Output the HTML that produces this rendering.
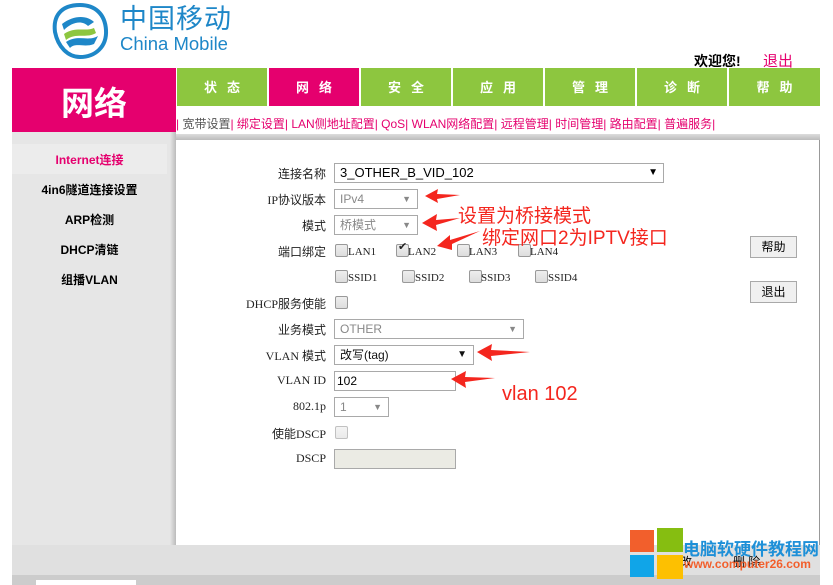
<!DOCTYPE html>
<html><head><meta charset="utf-8"><style>
body{margin:0;width:833px;height:585px;background:#fff;position:relative;overflow:hidden;font-family:"Liberation Sans","Noto Sans CJK SC",sans-serif;}
.a{position:absolute;}
.tab{position:absolute;top:68px;height:38px;background:#8dc63f;color:#fff;font-weight:bold;font-size:13px;text-align:center;line-height:40px;letter-spacing:10px;text-indent:10px;}
.lbl{position:absolute;font-size:12px;color:#222;text-align:right;width:100px;left:226px;font-family:"Liberation Serif","Noto Sans CJK SC",serif;}
.box{position:absolute;border:1px solid #a9a9a9;background:#fff;font-size:12px;box-sizing:border-box;padding-left:5px;line-height:18px;}
.cb{position:absolute;width:11px;height:11px;border:1px solid #999;border-radius:2px;background:linear-gradient(#eee,#ddd);}
.ct{position:absolute;font-size:11px;font-family:"Liberation Serif","Noto Sans CJK SC",serif;color:#222;}
.side{position:absolute;left:12px;width:155px;text-align:center;font-size:12px;font-weight:bold;}
.red{position:absolute;color:#f4261e;font-size:19px;white-space:nowrap;}
</style></head><body>
<svg class="a" style="left:50px;top:2px" width="60" height="58" viewBox="0 0 60 58">
<path d="M30 3 C10 3 3 15 5 30 C8 45 18 55 30 55 C45 55 57 45 56 28 C55 12 45 3 30 3Z" fill="none" stroke="#1e87c8" stroke-width="4"/>
<path d="M12 22 C25 12 38 14 44 20 L38 24 C32 18 22 20 14 28Z" fill="#1e87c8"/>
<path d="M14 32 C25 24 36 30 44 26 L46 31 C36 37 26 30 16 38Z" fill="#8dc63f"/>
<path d="M16 40 C28 32 38 40 48 34 L44 42 C34 46 26 40 20 46Z" fill="#1e87c8"/>
</svg>
<div class="a" style="left:120px;top:4px;font-size:27px;line-height:30px;color:#1e87c8;letter-spacing:1px;">中国移动</div>
<div class="a" style="left:120px;top:34px;font-size:18.5px;line-height:20px;color:#1e87c8;">China Mobile</div>
<div class="a" style="left:694px;top:51px;font-size:14px;font-weight:bold;">欢迎您!</div>
<div class="a" style="left:763px;top:50px;font-size:15px;color:#e5006e;">退出</div>
<div class="a" style="left:12px;top:68px;width:164px;height:64px;background:#e5006e;color:#fff;font-size:33px;font-weight:bold;text-align:center;line-height:72px;">网络</div>
<div class="tab" style="left:177px;width:90px">状态</div>
<div class="tab" style="left:269px;width:90px;background:#e5006e">网络</div>
<div class="tab" style="left:361px;width:90px">安全</div>
<div class="tab" style="left:453px;width:90px">应用</div>
<div class="tab" style="left:545px;width:90px">管理</div>
<div class="tab" style="left:637px;width:90px">诊断</div>
<div class="tab" style="left:729px;width:91px">帮助</div>
<div class="a" style="left:176px;top:115px;font-size:12px;color:#e5006e;white-space:nowrap;">| <span style="color:#555">宽带设置</span>| 绑定设置| LAN侧地址配置| QoS| WLAN网络配置| 远程管理| 时间管理| 路由配置| 普遍服务|</div>
<div class="a" style="left:176px;top:134px;width:644px;height:6px;background:linear-gradient(#ddd,#bbb);"></div>
<div class="a" style="left:12px;top:132px;width:164px;height:413px;background:#e6e6e6;"></div>
<div class="a" style="left:170px;top:132px;width:6px;height:413px;background:linear-gradient(90deg,#e6e6e6,#bbb);"></div>
<div class="a" style="left:12px;top:144px;width:155px;height:30px;background:#ececec;"></div>
<div class="side" style="top:151px;color:#e5006e;">Internet连接</div>
<div class="side" style="top:181px">4in6隧道连接设置</div>
<div class="side" style="top:211px">ARP检测</div>
<div class="side" style="top:241px">DHCP清链</div>
<div class="side" style="top:271px">组播VLAN</div>
<div class="a" style="left:819px;top:140px;width:1px;height:405px;background:#999;"></div>
<div class="a" style="left:12px;top:545px;width:808px;height:30px;background:#e0e0e0;"></div>
<div class="a" style="left:12px;top:575px;width:808px;height:10px;background:#ccc;"></div>
<div class="a" style="left:36px;top:580px;width:100px;height:5px;background:#fff;"></div>

<div class="lbl" style="top:165px">连接名称</div>
<div class="box" style="left:334px;top:163px;width:330px;height:20px;font-size:13px;">3_OTHER_B_VID_102<span style="position:absolute;right:5px;font-size:10px">▼</span></div>
<div class="lbl" style="top:191px">IP协议版本</div>
<div class="box" style="left:334px;top:189px;width:84px;height:20px;color:#888;">IPv4<span style="position:absolute;right:6px;font-size:9px">▼</span></div>
<div class="lbl" style="top:217px">模式</div>
<div class="box" style="left:334px;top:215px;width:84px;height:20px;color:#888;">桥模式<span style="position:absolute;right:6px;font-size:9px">▼</span></div>
<div class="lbl" style="top:243px">端口绑定</div>
<div class="cb" style="left:335px;top:244px"></div><div class="ct" style="left:348px;top:246px">LAN1</div>
<div class="cb" style="left:396px;top:244px"></div><div class="ct" style="left:398px;top:240px;font-size:11px">✔</div><div class="ct" style="left:408px;top:246px">LAN2</div>
<div class="cb" style="left:457px;top:244px"></div><div class="ct" style="left:469px;top:246px">LAN3</div>
<div class="cb" style="left:518px;top:244px"></div><div class="ct" style="left:530px;top:246px">LAN4</div>
<div class="cb" style="left:335px;top:270px"></div><div class="ct" style="left:348px;top:272px">SSID1</div>
<div class="cb" style="left:402px;top:270px"></div><div class="ct" style="left:415px;top:272px">SSID2</div>
<div class="cb" style="left:469px;top:270px"></div><div class="ct" style="left:481px;top:272px">SSID3</div>
<div class="cb" style="left:535px;top:270px"></div><div class="ct" style="left:548px;top:272px">SSID4</div>
<div class="lbl" style="top:295px">DHCP服务使能</div>
<div class="cb" style="left:335px;top:296px"></div>
<div class="lbl" style="top:321px">业务模式</div>
<div class="box" style="left:334px;top:319px;width:190px;height:20px;color:#888;">OTHER<span style="position:absolute;right:6px;font-size:9px">▼</span></div>
<div class="lbl" style="top:347px">VLAN 模式</div>
<div class="box" style="left:334px;top:345px;width:140px;height:20px;color:#111;">改写(tag)<span style="position:absolute;right:6px;font-size:10px">▼</span></div>
<div class="lbl" style="top:373px">VLAN ID</div>
<div class="box" style="left:334px;top:371px;width:122px;height:20px;padding-left:2px">102</div>
<div class="lbl" style="top:399px">802.1p</div>
<div class="box" style="left:334px;top:397px;width:55px;height:20px;color:#888;">1<span style="position:absolute;right:6px;font-size:9px">▼</span></div>
<div class="lbl" style="top:425px">使能DSCP</div>
<div class="cb" style="left:335px;top:426px;opacity:.6"></div>
<div class="lbl" style="top:451px">DSCP</div>
<div class="box" style="left:334px;top:449px;width:122px;height:20px;background:#ebebe4;"></div>

<div class="box" style="left:750px;top:236px;width:47px;height:22px;background:#f0f0f0;text-align:center;padding:0;line-height:20px;font-size:12px;">帮助</div>
<div class="box" style="left:750px;top:281px;width:47px;height:22px;background:#f0f0f0;text-align:center;padding:0;line-height:20px;font-size:12px;">退出</div>

<div class="red" style="left:458px;top:201px;">设置为桥接模式</div>
<div class="red" style="left:482px;top:223px;">绑定网口2为IPTV接口</div>
<div class="red" style="left:502px;top:383px;font-size:20px;">vlan 102</div>
<svg class="a" style="left:0;top:0" width="833" height="585">
<g fill="#f4261e">
<polygon points="425,196 438,189 437,194 460,195 437,199 438,203"/>
<polygon points="422,223 437,214 436,220 460,218 436,225 437,231"/>
<polygon points="437,246 450,235 450,240 480,231 452,244 452,250"/>
<polygon points="477,352 492,344 491,350 530,352 491,356 492,361"/>
<polygon points="451,379 466,371 465,377 495,378 465,382 466,388"/>
</g>
</svg>
<div class="a" style="left:680px;top:553px;font-size:12px;">改</div>
<div class="a" style="left:733px;top:553px;font-size:12px;">删 除</div>
<div class="a" style="left:630px;top:530px;width:24px;height:22px;background:#f25f2c"></div>
<div class="a" style="left:657px;top:528px;width:26px;height:24px;background:#86be11"></div>
<div class="a" style="left:630px;top:555px;width:24px;height:22px;background:#10a5e8"></div>
<div class="a" style="left:657px;top:555px;width:26px;height:24px;background:#fdc001"></div>
<div class="a" style="left:683px;top:535px;font-size:17px;font-weight:bold;color:#1e90d8;white-space:nowrap;">电脑软硬件教程网</div>
<div class="a" style="left:684px;top:557px;font-size:12px;font-weight:bold;color:#f25f2c;white-space:nowrap;">www.computer26.com</div>
</body></html>
